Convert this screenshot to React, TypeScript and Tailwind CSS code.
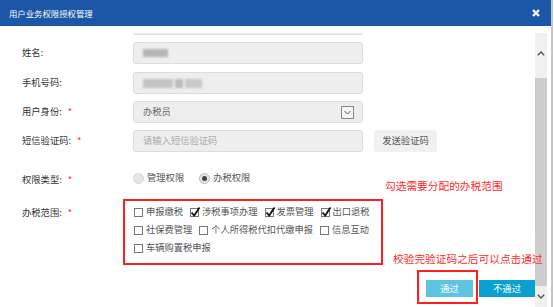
import React from 'react';

const font = { fontFamily: '"Noto Sans CJK SC", "Noto Sans", sans-serif' };

function Label({ text, required }: { text: string; required?: boolean }) {
  return (
    <div className="w-[111px] shrink-0 flex items-center text-[9.3px] text-[#333]">
      <span>{text}:</span>
      {required && <span className="ml-[6px] text-[#f33]">*</span>}
    </div>
  );
}

function Check({ checked, label }: { checked?: boolean; label: string }) {
  return (
    <div className="flex items-center mr-[7px]">
      <div className="relative w-[9px] h-[9px] border border-[#777] bg-white">
        {checked && (
          <svg className="absolute -left-[1px] -top-[3px]" width="11" height="12" viewBox="0 0 11 12">
            <path d="M1.5 6.5 L4.2 9.5 L9.5 1.5" fill="none" stroke="#111" strokeWidth="1.8" />
          </svg>
        )}
      </div>
      <span className="ml-[3px] text-[9.25px] text-[#555] whitespace-nowrap">{label}</span>
    </div>
  );
}

export default function App() {
  return (
    <div style={font} className="w-[553px] h-[307px] overflow-hidden bg-white border-r-2 border-[#c6c6c6] relative">
      {/* Header */}
      <div className="h-[26px] bg-[#1b56a7] flex items-center justify-between pl-[9px] pr-[11px]">
        <span className="text-[8.4px] text-white">用户业务权限授权管理</span>
        <svg width="8" height="8" viewBox="0 0 8 8">
          <path d="M1 1 L7 7 M7 1 L1 7" stroke="white" strokeWidth="2.2" />
        </svg>
      </div>

      <div className="flex h-[281px] pt-[7px]">
        {/* Form */}
        <div className="flex-1 pl-[22px]">
          <div className="ml-[111px] w-[230px] h-[2px] bg-[#eee] border-b border-x border-[#ddd] rounded-b-[3px]" />

          <div className="flex mt-[7px]">
            <Label text="姓名" />
            <div className="w-[230px] h-[22px] bg-[#eee] border border-[#ddd] rounded-[3px] flex items-center pl-[9px]">
              <div className="w-[25px] h-[8px] bg-[#b5b5b5] blur-[1px]" />
            </div>
          </div>

          <div className="flex mt-[8px]">
            <Label text="手机号码" />
            <div className="w-[230px] h-[22px] bg-[#eee] border border-[#ddd] rounded-[3px] flex items-center pl-[9px] gap-[2px]">
              <div className="w-[30px] h-[9px] bg-[#c4c4c4] blur-[1px]" />
              <div className="w-[8px] h-[9px] bg-[#bbb] blur-[1px]" />
              <div className="w-[17px] h-[9px] bg-[#c9c9c9] blur-[1px]" />
            </div>
          </div>

          <div className="flex mt-[7px]">
            <Label text="用户身份" required />
            <div className="w-[230px] h-[22px] bg-[#eee] border border-[#ddd] rounded-[3px] flex items-center justify-between pl-[9px] pr-[8px]">
              <span className="text-[9.3px] text-[#666]">办税员</span>
              <div className="w-[13px] h-[13px] border border-[#888] bg-[#f5f5f5] flex items-center justify-center">
                <svg width="7" height="5" viewBox="0 0 7 5">
                  <path d="M0.5 1 L3.5 4 L6.5 1" fill="none" stroke="#555" strokeWidth="1" />
                </svg>
              </div>
            </div>
          </div>

          <div className="flex mt-[7px]">
            <Label text="短信验证码" required />
            <div className="w-[230px] h-[22px] bg-[#eee] border border-[#ddd] rounded-[3px] flex items-center pl-[9px]">
              <span className="text-[9.3px] text-[#aaa]">请输入短信验证码</span>
            </div>
            <div className="ml-[11px] w-[63px] h-[22px] bg-[#f0f0f0] rounded-[3px] flex items-center justify-center text-[9.3px] text-[#555]">
              发送验证码
            </div>
          </div>

          <div className="flex mt-[18px] h-[16px]">
            <div className="pt-[3px]">
              <Label text="权限类型" required />
            </div>
            <div className="flex items-center">
              <div className="w-[11px] h-[11px] rounded-full bg-[#e6e6e6] border border-[#d6d6d6]" />
              <span className="ml-[3px] text-[9.3px] text-[#555]">管理权限</span>
              <div className="ml-[15px] w-[11px] h-[11px] rounded-full bg-[#e6e6e6] border border-[#bbb] flex items-center justify-center">
                <div className="w-[5px] h-[5px] rounded-full bg-[#444]" />
              </div>
              <span className="ml-[3px] text-[9.3px] text-[#555]">办税权限</span>
            </div>
          </div>

          <div className="flex mt-[13px]">
            <div className="pt-[7px] h-[20px]">
              <Label text="办税范围" required />
            </div>
            <div className="-ml-[10px] w-[260px] h-[66px] border-2 border-[#ff1f1f] pl-[9px] pt-[2px]">
              <div className="flex h-[18px] items-center">
                <Check label="申报缴税" />
                <Check checked label="涉税事项办理" />
                <Check checked label="发票管理" />
                <Check checked label="出口退税" />
              </div>
              <div className="flex h-[18px] items-center">
                <Check label="社保费管理" />
                <Check label="个人所得税代扣代缴申报" />
                <Check label="信息互动" />
              </div>
              <div className="flex h-[18px] items-center">
                <Check label="车辆购置税申报" />
              </div>
            </div>
          </div>

          <div className="flex justify-end gap-[6px] mt-[15px]">
            <div className="w-[47px] h-[17px] bg-[#5cc3e1] text-white text-[9.3px] flex items-center justify-center">通过</div>
            <div className="w-[56px] h-[17px] bg-[#0aa1d0] text-white text-[9.3px] flex items-center justify-center">不通过</div>
          </div>
        </div>

        {/* Scrollbar */}
        <div className="w-[12px] bg-[#f0f0f0] flex flex-col items-center mr-[4px]">
          <div className="h-[45px] flex items-center justify-center pb-[4px]">
            <svg width="8" height="5" viewBox="0 0 8 5">
              <path d="M0.8 4.2 L4 1 L7.2 4.2" fill="none" stroke="#555" strokeWidth="1.4" />
            </svg>
          </div>
          <div className="w-full h-[208px] bg-[#cdcdcd]" />
          <div className="flex-1 flex items-center justify-center">
            <svg width="8" height="5" viewBox="0 0 8 5">
              <path d="M0.8 0.8 L4 4 L7.2 0.8" fill="none" stroke="#555" strokeWidth="1.4" />
            </svg>
          </div>
        </div>
      </div>

      {/* Annotations */}
      <div className="absolute left-[385px] top-[178px] text-[10.7px] text-[#ff2a2a] whitespace-nowrap">勾选需要分配的办税范围</div>
      <div className="absolute left-[393px] top-[251px] text-[10.7px] text-[#ff2a2a] whitespace-nowrap">校验完验证码之后可以点击通过</div>
      <div className="absolute left-[417px] top-[270px] w-[61px] h-[34px] border-2 border-[#ff1f1f]" />
    </div>
  );
}
